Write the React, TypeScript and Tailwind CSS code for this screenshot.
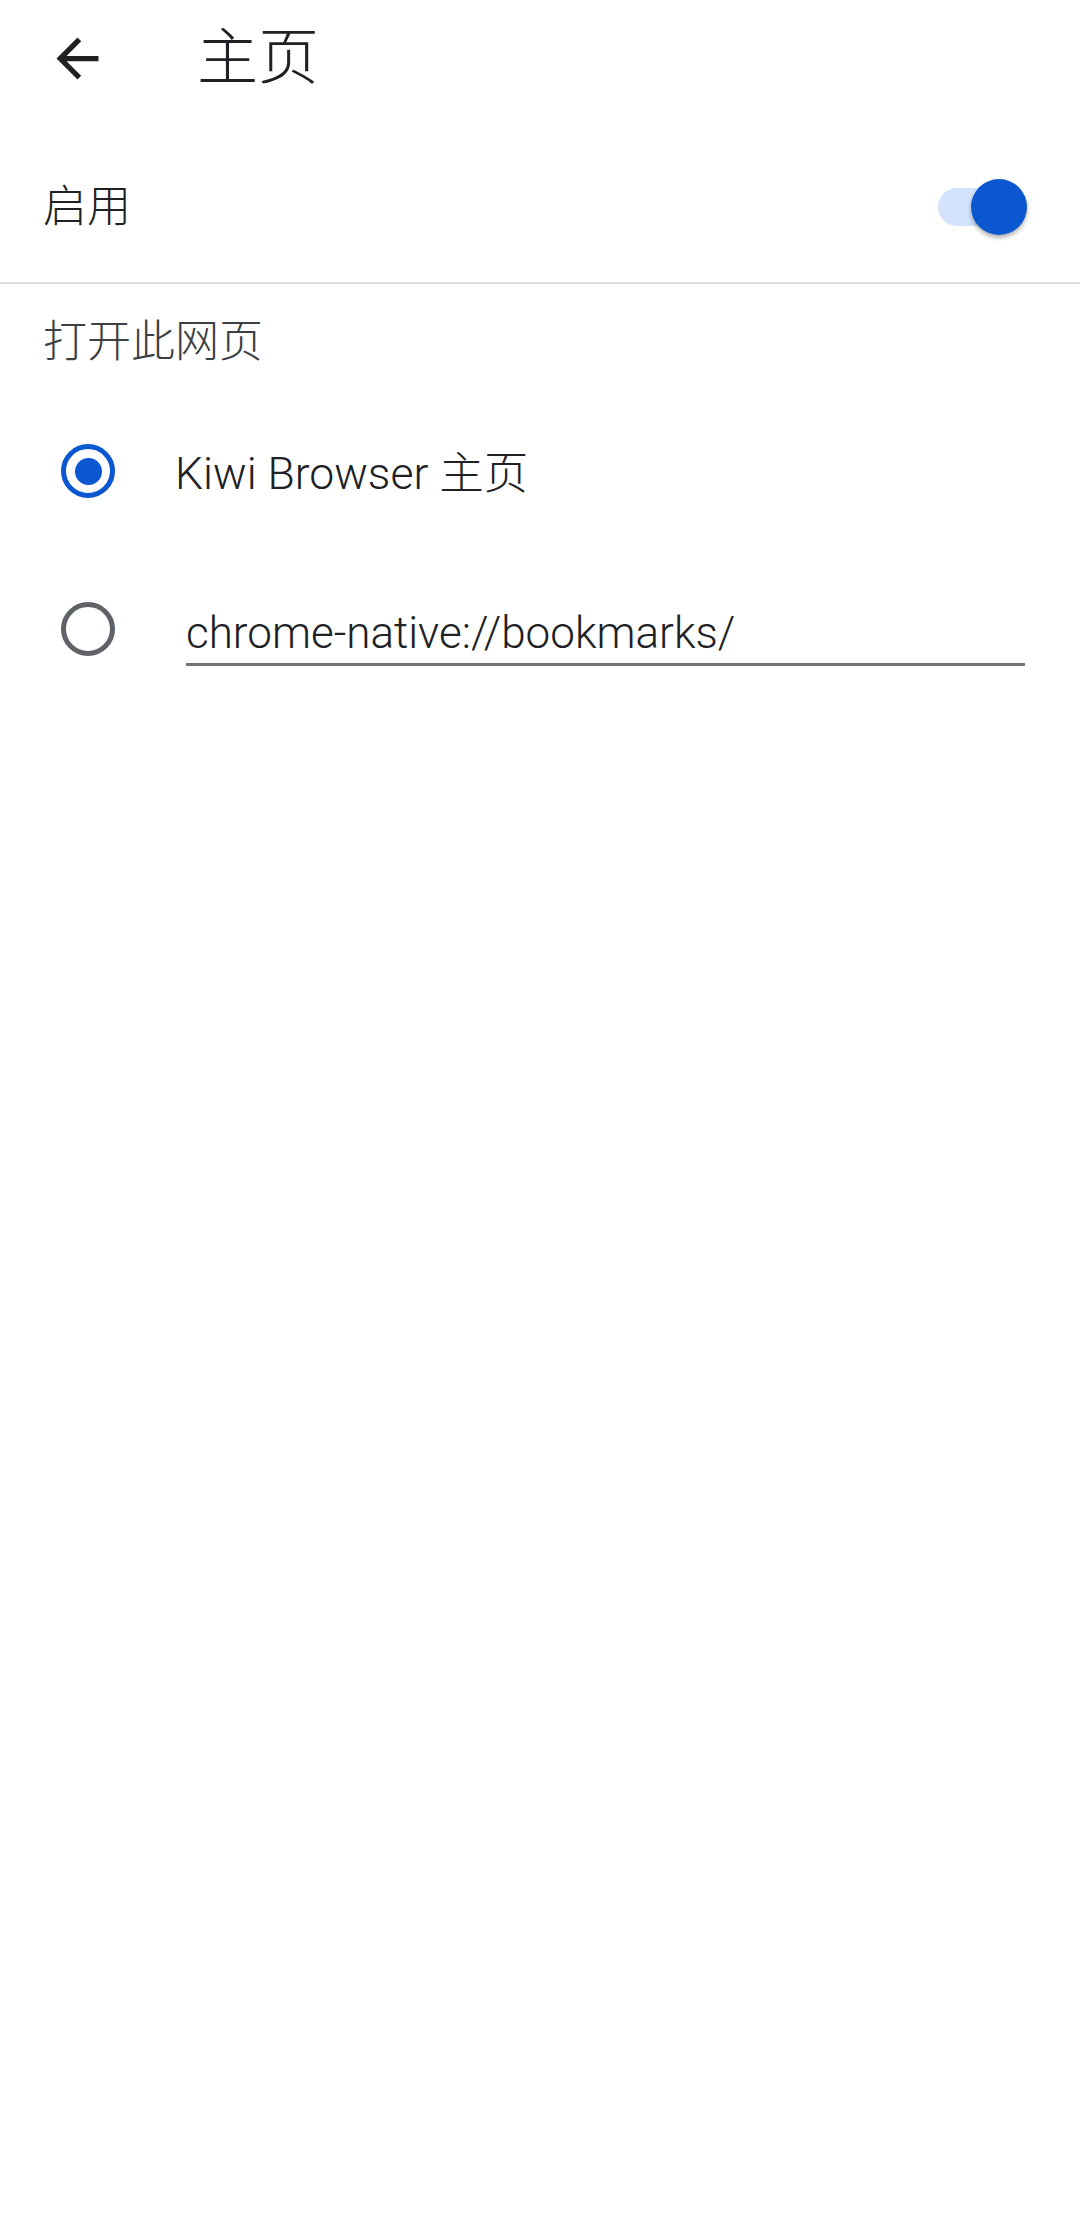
export default function App() {
  return (
    <div className="min-h-[2230px] w-[1080px] bg-white font-['Roboto','Noto_Sans_CJK_SC',sans-serif] font-light text-[#202124]">
      <header className="flex h-[116px] items-center">
        <button
          aria-label="返回"
          className="ml-[33px] flex h-[88px] w-[88px] items-center justify-center"
        >
          <svg width="63" height="63" viewBox="0 0 24 24" fill="#202124">
            <path d="M20 11H7.83l5.59-5.59L12 4l-8 8 8 8 1.41-1.41L7.83 13H20v-2z" />
          </svg>
        </button>
        <h1 className="ml-[76px] text-[61px] leading-none font-light">主页</h1>
      </header>

      <div className="flex h-[166px] items-center justify-between pt-[15px] pl-[43px] pr-[53px]">
        <span className="text-[44px] leading-none">启用</span>
        <div className="relative h-[56px] w-[89px]">
          <div className="absolute top-[9px] left-0 h-[38px] w-[80px] rounded-full bg-[#d3e3fd]" />
          <div className="absolute top-0 right-0 h-[56px] w-[56px] rounded-full bg-[#0b57d0] shadow-[0_3px_4px_rgba(0,0,0,0.3)]" />
        </div>
      </div>

      <div className="h-[2px] bg-[#dadce0]" />

      <div className="flex h-[116px] items-center pl-[43px]">
        <span className="text-[44px] leading-none text-[#3c4043]">打开此网页</span>
      </div>

      <div className="flex h-[142px] items-center">
        <div className="ml-[61px] flex h-[54px] w-[54px] items-center justify-center rounded-full border-[5px] border-[#0b57d0]">
          <div className="h-[27px] w-[27px] rounded-full bg-[#0b57d0]" />
        </div>
        <span className="mt-[6px] ml-[60px] text-[44.5px] leading-none">Kiwi Browser 主页</span>
      </div>

      <div className="flex h-[174px] items-start">
        <div className="mt-[60px] ml-[61px] h-[54px] w-[54px] rounded-full border-[5px] border-[#5f6368]" />
        <div className="mt-[69px] ml-[71px] w-[839px] border-b-[3px] border-[#70757a] pb-[8px]">
          <span className="text-[44px] leading-none">chrome-native://bookmarks/</span>
        </div>
      </div>
    </div>
  );
}
